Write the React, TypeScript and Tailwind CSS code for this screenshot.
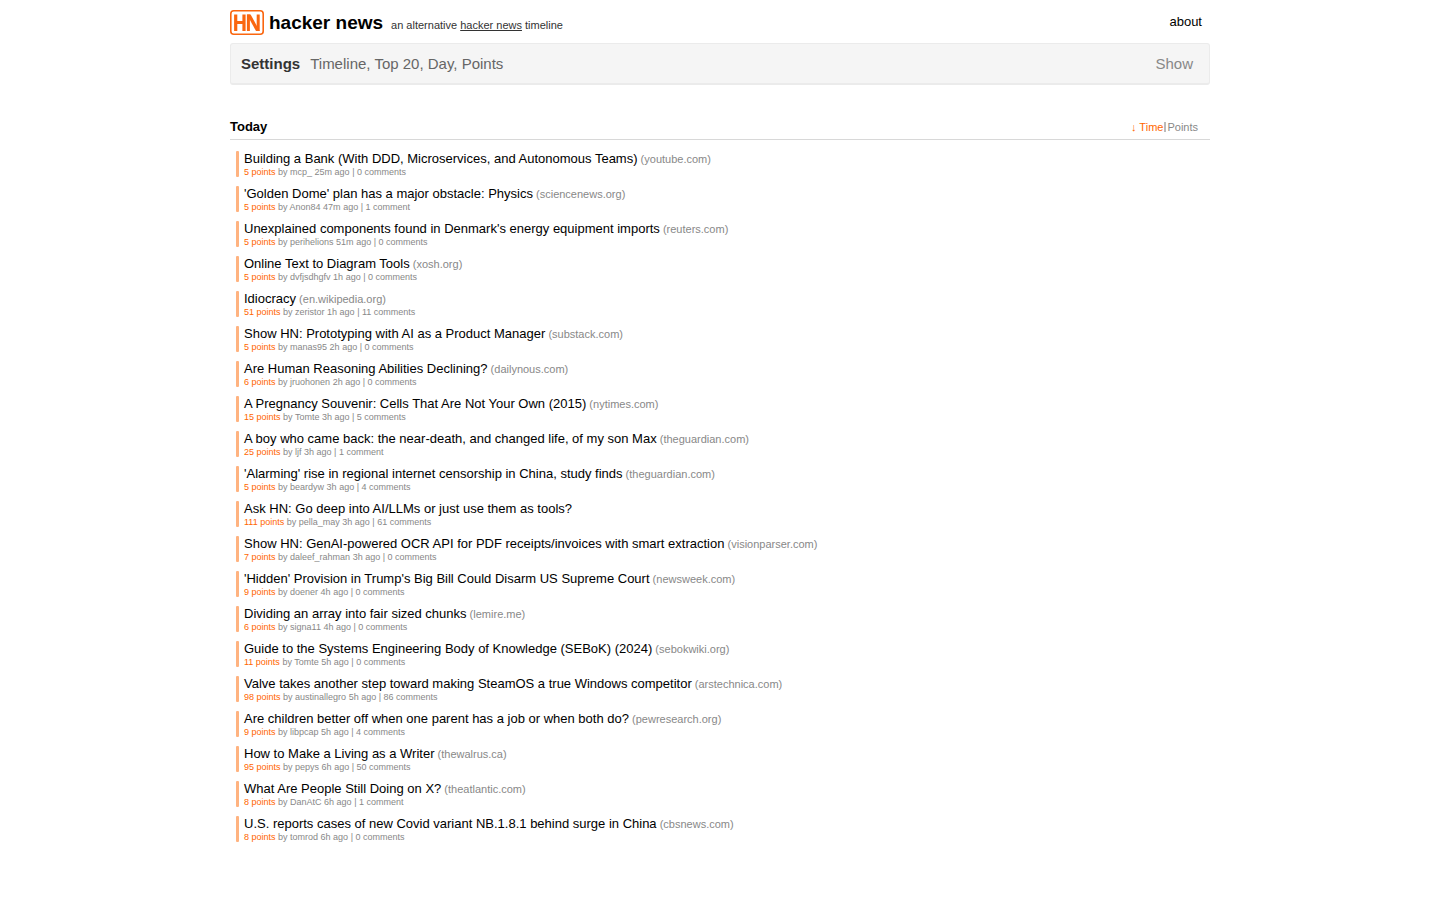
type Story = {
  title: string;
  site?: string;
  points: number;
  by: string;
  age: string;
  comments: number;
};

const stories: Story[] = [
  { title: "Building a Bank (With DDD, Microservices, and Autonomous Teams)", site: "youtube.com", points: 5, by: "mcp_", age: "25m", comments: 0 },
  { title: "'Golden Dome' plan has a major obstacle: Physics", site: "sciencenews.org", points: 5, by: "Anon84", age: "47m", comments: 1 },
  { title: "Unexplained components found in Denmark's energy equipment imports", site: "reuters.com", points: 5, by: "perihelions", age: "51m", comments: 0 },
  { title: "Online Text to Diagram Tools", site: "xosh.org", points: 5, by: "dvfjsdhgfv", age: "1h", comments: 0 },
  { title: "Idiocracy", site: "en.wikipedia.org", points: 51, by: "zeristor", age: "1h", comments: 11 },
  { title: "Show HN: Prototyping with AI as a Product Manager", site: "substack.com", points: 5, by: "manas95", age: "2h", comments: 0 },
  { title: "Are Human Reasoning Abilities Declining?", site: "dailynous.com", points: 6, by: "jruohonen", age: "2h", comments: 0 },
  { title: "A Pregnancy Souvenir: Cells That Are Not Your Own (2015)", site: "nytimes.com", points: 15, by: "Tomte", age: "3h", comments: 5 },
  { title: "A boy who came back: the near-death, and changed life, of my son Max", site: "theguardian.com", points: 25, by: "ljf", age: "3h", comments: 1 },
  { title: "'Alarming' rise in regional internet censorship in China, study finds", site: "theguardian.com", points: 5, by: "beardyw", age: "3h", comments: 4 },
  { title: "Ask HN: Go deep into AI/LLMs or just use them as tools?", points: 111, by: "pella_may", age: "3h", comments: 61 },
  { title: "Show HN: GenAI-powered OCR API for PDF receipts/invoices with smart extraction", site: "visionparser.com", points: 7, by: "daleef_rahman", age: "3h", comments: 0 },
  { title: "'Hidden' Provision in Trump's Big Bill Could Disarm US Supreme Court", site: "newsweek.com", points: 9, by: "doener", age: "4h", comments: 0 },
  { title: "Dividing an array into fair sized chunks", site: "lemire.me", points: 6, by: "signa11", age: "4h", comments: 0 },
  { title: "Guide to the Systems Engineering Body of Knowledge (SEBoK) (2024)", site: "sebokwiki.org", points: 11, by: "Tomte", age: "5h", comments: 0 },
  { title: "Valve takes another step toward making SteamOS a true Windows competitor", site: "arstechnica.com", points: 98, by: "austinallegro", age: "5h", comments: 86 },
  { title: "Are children better off when one parent has a job or when both do?", site: "pewresearch.org", points: 9, by: "libpcap", age: "5h", comments: 4 },
  { title: "How to Make a Living as a Writer", site: "thewalrus.ca", points: 95, by: "pepys", age: "6h", comments: 50 },
  { title: "What Are People Still Doing on X?", site: "theatlantic.com", points: 8, by: "DanAtC", age: "6h", comments: 1 },
  { title: "U.S. reports cases of new Covid variant NB.1.8.1 behind surge in China", site: "cbsnews.com", points: 8, by: "tomrod", age: "6h", comments: 0 },
];

export default function App() {
  return (
    <div className="mx-auto max-w-[980px] pb-12 font-['Liberation_Sans',Arial,sans-serif] text-[13px] text-black">
      <Header />
      <SettingsBar />
      <main>
        <div className="mt-7 flex items-end justify-between border-b border-[#d8d8d8] pb-1">
          <h2 className="text-[13px] leading-4 font-bold">Today</h2>
          <div className="flex items-center pt-1.5 pr-3 text-[11px] leading-4 text-[#888]">
            <button className="text-[#ff6600]">↓ Time</button>
            <span className="mx-px h-2.5 w-0.5 bg-[#bbb]" />
            <button>Points</button>
          </div>
        </div>
        <ol className="mt-[11px] flex flex-col gap-[9px] pl-1.5">
          {stories.map((story) => (
            <StoryRow key={story.title} story={story} />
          ))}
        </ol>
      </main>
    </div>
  );
}

function Header() {
  return (
    <header className="flex items-center justify-between pt-2.5 pr-2">
      <div className="flex items-center">
        <Logo />
        <h1 className="ml-[5px] text-[19px] leading-[25px] font-bold">hacker news</h1>
        <p className="mt-1 ml-2 text-[11px] leading-4 text-[#333]">
          an alternative{" "}
          <a href="#hn" className="underline">
            hacker news
          </a>{" "}
          timeline
        </p>
      </div>
      <a href="#about" className="pb-0.5">
        about
      </a>
    </header>
  );
}

function Logo() {
  return (
    <svg width="34" height="25" viewBox="0 0 34 25" fill="none" stroke="#fa660f" aria-hidden="true">
      <rect x="0.8" y="0.8" width="32.4" height="23.4" rx="3" strokeWidth="1.6" />
      <path d="M5.7 4.5V21M14 4.5V21M5.7 12.5H14" strokeWidth="3.2" />
      <path d="M18.4 4.5V21M28.2 4.5V21" strokeWidth="3" />
      <path d="M16.9 4.5H20.6L29.7 21H26Z" fill="#fa660f" stroke="none" />
    </svg>
  );
}

function SettingsBar() {
  return (
    <section className="mt-2 flex items-center justify-between rounded-[3px] border border-b-2 border-[#ebebeb] bg-[#f5f5f5] py-2.5 pr-4 pl-2.5 text-[15px] leading-[19px]">
      <div className="flex gap-2.5">
        <h2 className="font-bold text-[#333]">Settings</h2>
        <span className="text-[#666]">Timeline, Top 20, Day, Points</span>
      </div>
      <button className="text-[#888]">Show</button>
    </section>
  );
}

function StoryRow({ story }: { story: Story }) {
  return (
    <li className="flex gap-[5px]">
      <span className="w-[3px] shrink-0 rounded-[1px] bg-[#ffb380]" />
      <div>
        <div className="leading-4">
          <a href="#story">{story.title}</a>
          {story.site && <span className="text-[11px] text-[#888]"> ({story.site})</span>}
        </div>
        <div className="text-[9px] leading-[10px] text-[#888]">
          <span className="text-[#ff6600]">{story.points} points</span> by {story.by} {story.age} ago |{" "}
          <a href="#comments">
            {story.comments} {story.comments === 1 ? "comment" : "comments"}
          </a>
        </div>
      </div>
    </li>
  );
}
